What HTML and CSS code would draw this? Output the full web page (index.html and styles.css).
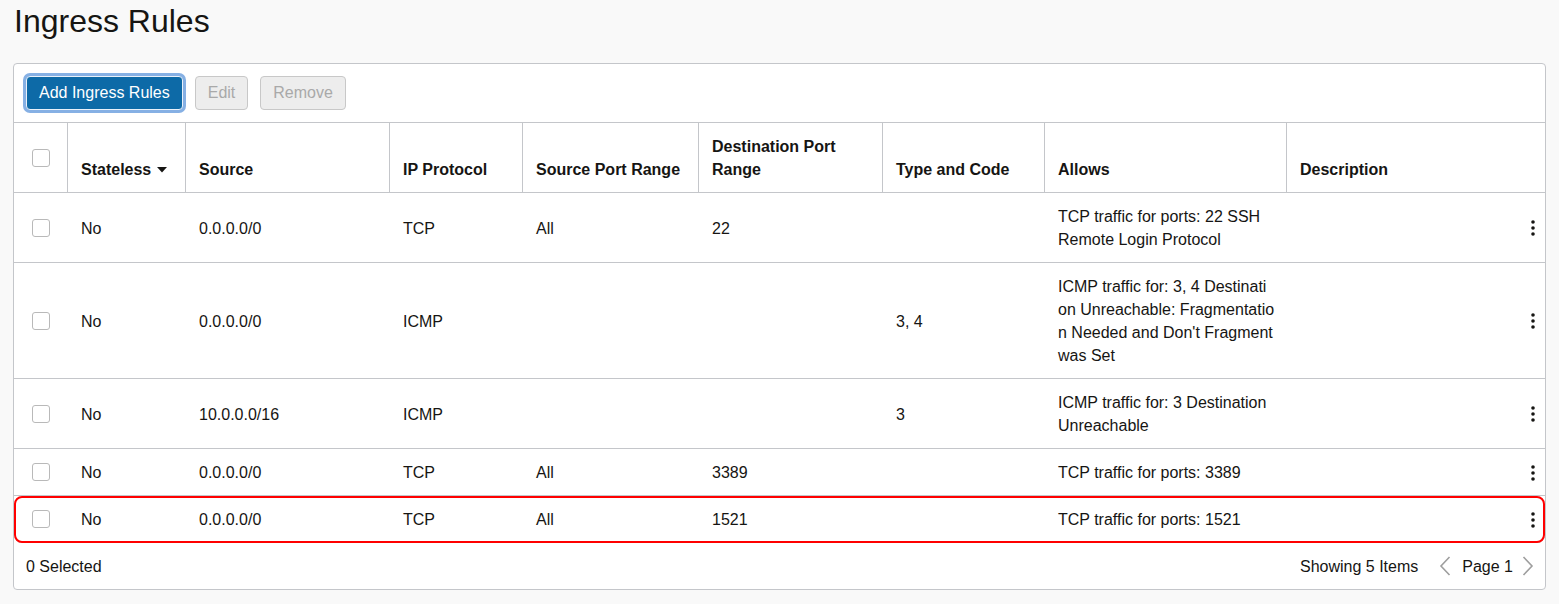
FILE: index.html
```html
<!DOCTYPE html>
<html lang="en">
<head>
<meta charset="utf-8">
<title>Ingress Rules</title>
<link rel="stylesheet" href="styles.css">
</head>
<body>
<h1 class="page-title">Ingress Rules</h1>
<div class="panel">
  <div class="toolbar">
    <button class="btn btn-primary">Add Ingress Rules</button>
    <button class="btn btn-disabled" disabled>Edit</button>
    <button class="btn btn-disabled" disabled>Remove</button>
  </div>
  <div class="table">
    <div class="row head">
      <div class="cell check"><span class="checkbox"></span></div>
      <div class="cell">Stateless<svg class="caret" width="10" height="6" viewBox="0 0 10 6"><polygon points="0,0 10,0 5,5.5" fill="#161513"/></svg></div>
      <div class="cell">Source</div>
      <div class="cell">IP Protocol</div>
      <div class="cell">Source Port Range</div>
      <div class="cell">Destination Port Range</div>
      <div class="cell">Type and Code</div>
      <div class="cell">Allows</div>
      <div class="cell">Description</div>
    </div>
    <div class="row">
      <div class="cell check"><span class="checkbox"></span></div>
      <div class="cell">No</div>
      <div class="cell">0.0.0.0/0</div>
      <div class="cell">TCP</div>
      <div class="cell">All</div>
      <div class="cell">22</div>
      <div class="cell"></div>
      <div class="cell allows">TCP traffic for ports: 22 SSH Remote Login Protocol</div>
      <div class="cell actions"><svg width="4" height="16" viewBox="0 0 4 16"><circle cx="2" cy="2" r="1.8"/><circle cx="2" cy="8" r="1.8"/><circle cx="2" cy="14" r="1.8"/></svg></div>
    </div>
    <div class="row">
      <div class="cell check"><span class="checkbox"></span></div>
      <div class="cell">No</div>
      <div class="cell">0.0.0.0/0</div>
      <div class="cell">ICMP</div>
      <div class="cell"></div>
      <div class="cell"></div>
      <div class="cell">3, 4</div>
      <div class="cell allows">ICMP traffic for: 3, 4 Destination Unreachable: Fragmentation Needed and Don't Fragment was Set</div>
      <div class="cell actions"><svg width="4" height="16" viewBox="0 0 4 16"><circle cx="2" cy="2" r="1.8"/><circle cx="2" cy="8" r="1.8"/><circle cx="2" cy="14" r="1.8"/></svg></div>
    </div>
    <div class="row">
      <div class="cell check"><span class="checkbox"></span></div>
      <div class="cell">No</div>
      <div class="cell">10.0.0.0/16</div>
      <div class="cell">ICMP</div>
      <div class="cell"></div>
      <div class="cell"></div>
      <div class="cell">3</div>
      <div class="cell allows">ICMP traffic for: 3 Destination Unreachable</div>
      <div class="cell actions"><svg width="4" height="16" viewBox="0 0 4 16"><circle cx="2" cy="2" r="1.8"/><circle cx="2" cy="8" r="1.8"/><circle cx="2" cy="14" r="1.8"/></svg></div>
    </div>
    <div class="row">
      <div class="cell check"><span class="checkbox"></span></div>
      <div class="cell">No</div>
      <div class="cell">0.0.0.0/0</div>
      <div class="cell">TCP</div>
      <div class="cell">All</div>
      <div class="cell">3389</div>
      <div class="cell"></div>
      <div class="cell allows">TCP traffic for ports: 3389</div>
      <div class="cell actions"><svg width="4" height="16" viewBox="0 0 4 16"><circle cx="2" cy="2" r="1.8"/><circle cx="2" cy="8" r="1.8"/><circle cx="2" cy="14" r="1.8"/></svg></div>
    </div>
    <div class="row highlight">
      <div class="cell check"><span class="checkbox"></span></div>
      <div class="cell">No</div>
      <div class="cell">0.0.0.0/0</div>
      <div class="cell">TCP</div>
      <div class="cell">All</div>
      <div class="cell">1521</div>
      <div class="cell"></div>
      <div class="cell allows">TCP traffic for ports: 1521</div>
      <div class="cell actions"><svg width="4" height="16" viewBox="0 0 4 16"><circle cx="2" cy="2" r="1.8"/><circle cx="2" cy="8" r="1.8"/><circle cx="2" cy="14" r="1.8"/></svg></div>
    </div>
  </div>
  <div class="footer">
    <span>0 Selected</span>
    <div class="pager">
      <span class="count">Showing 5 Items</span>
      <svg class="chev" width="12" height="20" viewBox="0 0 12 20"><polyline points="10.5,1 2,10 10.5,19" fill="none" stroke="#9e9e9e" stroke-width="1.6"/></svg>
      <span class="page">Page 1</span>
      <svg class="chev" width="12" height="20" viewBox="0 0 12 20"><polyline points="1.5,1 10,10 1.5,19" fill="none" stroke="#9e9e9e" stroke-width="1.6"/></svg>
    </div>
  </div>
</div>
</body>
</html>
```
FILE: styles.css
```css
* { box-sizing: border-box; }
html, body { margin: 0; }
body {
  background: #f9f9f9;
  font-family: "Liberation Sans", Arial, sans-serif;
  color: #161513;
  font-size: 16px;
  line-height: 23px;
  padding: 0 13px;
}
.page-title {
  font-size: 32px;
  font-weight: 400;
  line-height: 37px;
  margin: 3px 0 23px 1px;
}
.panel {
  background: #fff;
  border: 1px solid #c4c6ca;
  border-radius: 4px;
}
.toolbar {
  display: flex;
  gap: 12px;
  padding: 12px 12px;
  border-bottom: 1px solid #c4c6ca;
}
.btn {
  height: 34px;
  padding: 0 12px;
  font-family: inherit;
  font-size: 16px;
  border-radius: 4px;
  border: 1px solid #c8c8c8;
}
.btn-primary {
  background: #0d6aa7;
  color: #fff;
  border-color: #eaf1fa;
  box-shadow: 0 0 0 3px #86b0e4;
  padding: 0 12px;
}
.btn-disabled {
  background: #ededed;
  color: #a9a9a9;
}
.row {
  display: grid;
  grid-template-columns: 53px 118px 204px 133px 176px 184px 162px 242px 1fr;
  border-bottom: 1px solid #c4c6ca;
}
.cell {
  padding: 12px 11px 11px 14px;
  display: flex;
  align-items: center;
}
.head .cell {
  align-items: flex-end;
  font-weight: 700;
  min-height: 69px;
  padding: 11px 11px 11.5px 13px;
}
.head .cell + .cell { border-left: 1px solid #c4c6ca; }
.cell.check, .head .cell.check {
  align-items: center;
  justify-content: center;
  padding: 0;
}
.checkbox {
  width: 18px;
  height: 18px;
  border: 1px solid #b9b9b9;
  border-radius: 3px;
  background: #fff;
  display: block;
}
.caret { margin: 0 0 8px 6px; }
.allows { word-break: break-all; display: block; align-self: center; }
.actions { justify-content: flex-end; padding-right: 10px; }
.actions svg { fill: #161513; }
.highlight {
  outline: 2px solid #ff0000;
  outline-offset: -2px;
  border-radius: 8px;
}
.footer {
  height: 46px;
  display: flex;
  align-items: center;
  justify-content: space-between;
  padding: 0 11px 0 12px;
}
.pager { display: flex; align-items: center; }
.count { margin-right: 21px; }
.page { margin: 0 9px 0 11px; }
```
